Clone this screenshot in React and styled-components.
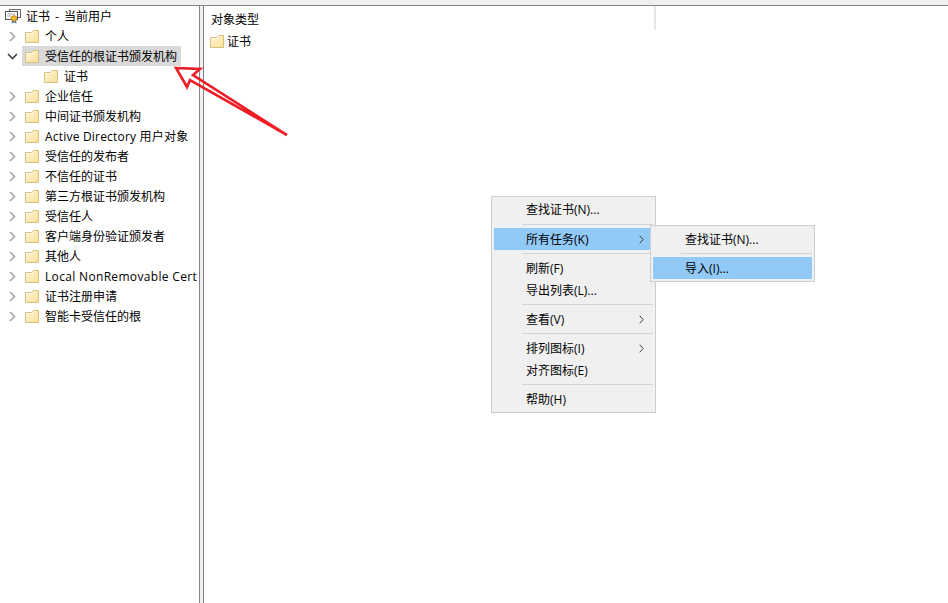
import React from 'react';
import styled, { createGlobalStyle } from 'styled-components';

const GlobalStyle = createGlobalStyle`
	html, body {
		margin: 0;
		padding: 0;
		background: #fff;
	}
	body {
		font-family: "Open Sans", "Noto Sans CJK SC", sans-serif;
		font-size: 12px;
		color: #000;
	}
`;

const Page = styled.div`
	position: relative;
	width: 948px;
	height: 603px;
	overflow: hidden;
	display: flex;
	flex-direction: column;
	background: #f0f0f0;
`;
const Panes = styled.div`
	flex: 1;
	min-height: 0;
	margin-top: 5px;
	display: flex;
	gap: 3px;
	border-top: 1px solid #85838c;
`;
const TreePane = styled.div`
	width: 199px;
	background: #fff;
	border-right: 1px solid #85838c;
	overflow: hidden;
	flex-shrink: 0;
`;
const ListPane = styled.div`
	flex: 1;
	background: #fff;
	border-left: 1px solid #85838c;
`;

// line-height 16 sits the text high in Open Sans' strut, margin brings it back
const Label = styled.span`
	display: block;
	line-height: 16px;
	margin-top: 2px;
	white-space: nowrap;
	letter-spacing: ${(props) => props.$tracking || 0}px;
	word-spacing: ${(props) => (props.$spaced ? '2px' : '0')};
`;

const TreeRow = styled.div`
	height: 20px;
	display: flex;
	align-items: center;
	padding-left: ${(props) => (props.$root ? '5px' : props.$child ? '41px' : '0')};
	gap: ${(props) => (props.$root ? '5px' : '0')};
	white-space: nowrap;
`;
const Toggle = styled.span`
	width: 22px;
	height: 20px;
	flex-shrink: 0;
	display: flex;
	align-items: center;
	justify-content: center;
	padding-left: 3px;
	box-sizing: border-box;
`;
const RowLabel = styled.span`
	height: 20px;
	display: flex;
	align-items: center;
	gap: 6px;
	padding: 0 4px 0 3px;
	background: ${(props) => (props.$selected ? '#d9d9d9' : 'transparent')};
`;

const ListHeader = styled.div`
	width: 452px;
	height: 24px;
	padding: 1px 0 0 7px;
	box-sizing: border-box;
	display: flex;
	align-items: center;
	border-right: 2px solid #e6e6e6;
`;
const ListItem = styled.div`
	margin-top: 1px;
	height: 20px;
	padding-left: 6px;
	display: flex;
	align-items: center;
	gap: 3px;
`;

const Menu = styled.div`
	position: absolute;
	left: ${(props) => props.$left}px;
	top: ${(props) => props.$top}px;
	width: ${(props) => props.$width}px;
	box-sizing: border-box;
	padding: ${(props) => props.$padTop}px 2px 2px;
	background: #f0f0f0;
	border: 1px solid #cdcdcd;
`;
const MenuItem = styled.div`
	height: 22px;
	display: flex;
	align-items: center;
	justify-content: space-between;
	padding: 0 9px 0 32px;
	background: ${(props) => (props.$active ? '#91c9f7' : 'transparent')};
`;
const MenuSeparator = styled.div`
	height: 1px;
	margin: ${(props) => (props.$loose ? '4px' : '3px')} 0 3px 28px;
	background: #d4d4d4;
`;
const Overlay = styled.svg`
	position: absolute;
	left: 0;
	top: 0;
	pointer-events: none;
`;

const FolderIcon = () => (
	<svg width="14" height="13" viewBox="0 0 14 13" style={{ flexShrink: 0 }}>
		<defs>
			<linearGradient id="folderFill" x1="0" y1="0" x2="1" y2="1">
				<stop offset="0" stopColor="#fff6d2" />
				<stop offset="1" stopColor="#f8e09c" />
			</linearGradient>
		</defs>
		<path
			d="M0.5 2.5V12.5H13.5V0.5H8.5L6.5 2.5Z"
			fill="url(#folderFill)"
			stroke="#d9bf7c"
		/>
		<path d="M1 3.5H6.8L9 1.2" fill="none" stroke="#fffbe9" />
	</svg>
);

const CertStoreIcon = () => (
	<svg width="16" height="16" viewBox="0 0 16 16" style={{ flexShrink: 0 }}>
		<rect x="4.5" y="1.5" width="11" height="8" fill="#f4f4f4" stroke="#6b6b6b" />
		<rect x="0.5" y="3.5" width="12" height="8" fill="#fff" stroke="#555" />
		<path d="M2.5 6H10M2.5 8H6" stroke="#a8a8a8" />
		<path d="M7 12L6.5 15.5L9 14.4L11.5 15.5L11 12Z" fill="#3f79c4" />
		<circle cx="9" cy="10.5" r="2.8" fill="#f0b429" stroke="#c98a12" />
	</svg>
);

const ChevronRight = () => (
	<svg width="7" height="11" viewBox="0 0 7 11">
		<path d="M1 1L5.5 5.5L1 10" fill="none" stroke="#a6a6a6" strokeWidth="1.6" />
	</svg>
);

const ChevronDown = () => (
	<svg width="11" height="7" viewBox="0 0 11 7">
		<path d="M1 1L5.5 5.5L10 1" fill="none" stroke="#404040" strokeWidth="1.6" />
	</svg>
);

const SubmenuArrow = () => (
	<svg width="5" height="9" viewBox="0 0 5 9">
		<path d="M0.7 0.7L4.2 4.5L0.7 8.3" fill="none" stroke="#404040" strokeWidth="1" />
	</svg>
);

const stores = [
	{ label: '个人' },
	{ label: '受信任的根证书颁发机构', open: true },
	{ label: '证书', child: true },
	{ label: '企业信任' },
	{ label: '中间证书颁发机构' },
	{ label: 'Active Directory 用户对象', tracking: 0.2 },
	{ label: '受信任的发布者' },
	{ label: '不信任的证书' },
	{ label: '第三方根证书颁发机构' },
	{ label: '受信任人' },
	{ label: '客户端身份验证颁发者' },
	{ label: '其他人' },
	{ label: 'Local NonRemovable Cert', tracking: 0.33 },
	{ label: '证书注册申请' },
	{ label: '智能卡受信任的根' },
];

const App = () => (
	<Page>
		<GlobalStyle />
		<Panes>
			<TreePane>
				<TreeRow $root>
					<CertStoreIcon />
					<Label $spaced>证书 - 当前用户</Label>
				</TreeRow>
				{stores.map((store) =>
					store.child ? (
						<TreeRow $child key={store.label}>
							<RowLabel>
								<FolderIcon />
								<Label>{store.label}</Label>
							</RowLabel>
						</TreeRow>
					) : (
						<TreeRow key={store.label}>
							<Toggle>{store.open ? <ChevronDown /> : <ChevronRight />}</Toggle>
							<RowLabel $selected={store.open}>
								<FolderIcon />
								<Label $tracking={store.tracking}>{store.label}</Label>
							</RowLabel>
						</TreeRow>
					)
				)}
			</TreePane>
			<ListPane>
				<ListHeader>
					<Label>对象类型</Label>
				</ListHeader>
				<ListItem>
					<FolderIcon />
					<Label>证书</Label>
				</ListItem>
			</ListPane>
		</Panes>

		<Menu $left={491} $top={196} $width={165} $padTop={1}>
			<MenuItem>
				<Label>查找证书(N)...</Label>
			</MenuItem>
			<MenuSeparator $loose />
			<MenuItem $active>
				<Label>所有任务(K)</Label>
				<SubmenuArrow />
			</MenuItem>
			<MenuSeparator />
			<MenuItem>
				<Label>刷新(F)</Label>
			</MenuItem>
			<MenuItem>
				<Label>导出列表(L)...</Label>
			</MenuItem>
			<MenuSeparator />
			<MenuItem>
				<Label>查看(V)</Label>
				<SubmenuArrow />
			</MenuItem>
			<MenuSeparator />
			<MenuItem>
				<Label>排列图标(I)</Label>
				<SubmenuArrow />
			</MenuItem>
			<MenuItem>
				<Label>对齐图标(E)</Label>
			</MenuItem>
			<MenuSeparator />
			<MenuItem>
				<Label>帮助(H)</Label>
			</MenuItem>
		</Menu>

		<Menu $left={650} $top={225} $width={165} $padTop={2}>
			<MenuItem>
				<Label>查找证书(N)...</Label>
			</MenuItem>
			<MenuSeparator />
			<MenuItem $active>
				<Label>导入(I)...</Label>
			</MenuItem>
		</Menu>

		<Overlay width="948" height="603" viewBox="0 0 948 603">
			<path
				d="M176 68L200 69L193 75L287 135L190 80L187 87Z"
				fill="none"
				stroke="#ee1c25"
				strokeWidth="2.6"
				strokeLinejoin="miter"
			/>
		</Overlay>
	</Page>
);

export default App;
